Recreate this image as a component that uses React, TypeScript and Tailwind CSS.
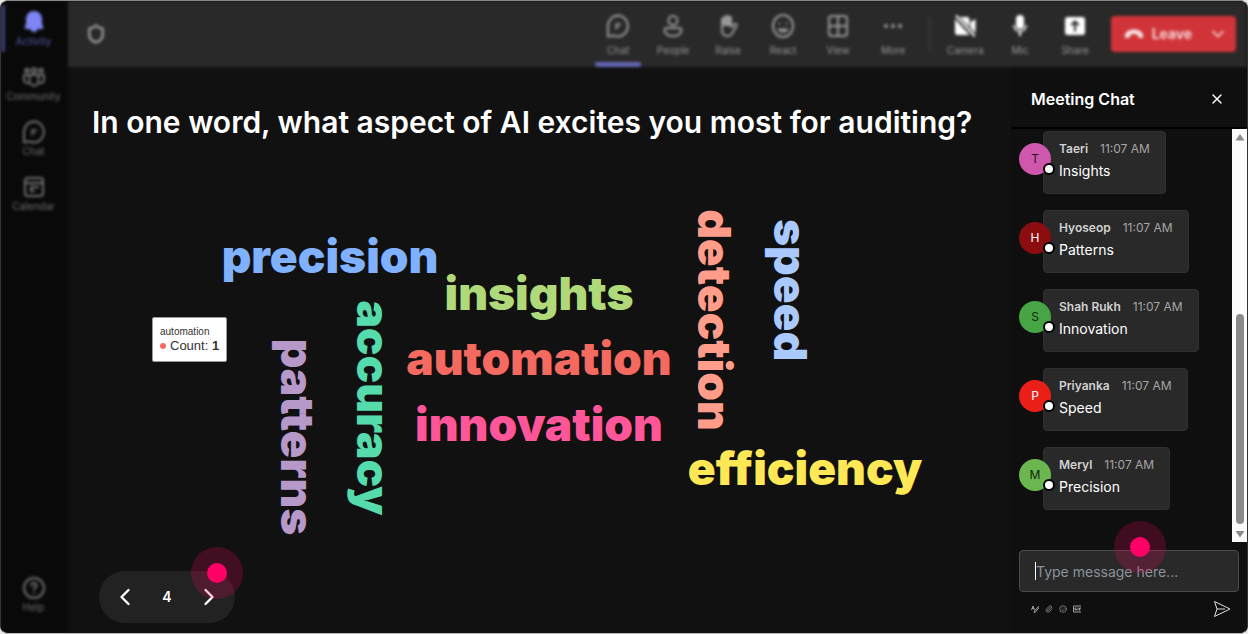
import type { ReactNode } from 'react';
import { ChevronDown, ChevronLeft, ChevronRight, Paperclip, Shield, Smile, X } from 'lucide-react';

interface CloudWord {
  text: string;
  x: number;
  y: number;
  color: string;
  vertical?: boolean;
}

const words: CloudWord[] = [
  { text: 'precision', x: 262, y: 131, color: '#80b1ff' },
  { text: 'insights', x: 471, y: 168, color: '#b0d97a' },
  { text: 'automation', x: 471, y: 233, color: '#f46a60' },
  { text: 'innovation', x: 471, y: 299, color: '#ff5599' },
  { text: 'efficiency', x: 737, y: 343, color: '#ffe855' },
  { text: 'patterns', x: 213, y: 295, color: '#b799c9', vertical: true },
  { text: 'accuracy', x: 289, y: 266, color: '#55dbac', vertical: true },
  { text: 'detection', x: 630, y: 178, color: '#ff9d8a', vertical: true },
  { text: 'speed', x: 706, y: 148, color: '#a9c9ff', vertical: true },
];

const messages = [
  { name: 'Taeri', text: 'Insights', avatar: 'bg-[#cf57ae] text-[#2b1024]' },
  { name: 'Hyoseop', text: 'Patterns', avatar: 'bg-[#8b0d10] text-white' },
  { name: 'Shah Rukh', text: 'Innovation', avatar: 'bg-[#48a545] text-[#10240f]' },
  { name: 'Priyanka', text: 'Speed', avatar: 'bg-[#ea2018] text-white' },
  { name: 'Meryl', text: 'Precision', avatar: 'bg-[#6cb650] text-[#10240f]' },
];

function Icon({ children, fill }: { children: ReactNode; fill?: boolean }) {
  return (
    <svg
      className="size-6"
      viewBox="0 0 24 24"
      fill={fill ? 'currentColor' : 'none'}
      stroke="currentColor"
      strokeWidth={fill ? 0 : 2}
      strokeLinecap="round"
      strokeLinejoin="round"
      aria-hidden="true"
    >
      {children}
    </svg>
  );
}

const chatIcon = (
  <Icon>
    <path d="M12 1.500a10 10.500 0 1 1-4.600 19.900L2 22.500V12A10 10.500 0 0 1 12 1.500z" />
    <path d="M10 15v-5h4.500M10 12.500h3" strokeWidth={1.5} />
  </Icon>
);

const sideItems = [
  {
    label: 'Activity',
    icon: (
      <Icon fill>
        <path d="M12 1a8 8 0 0 0-8 8v4.700L2.700 17.500a1.200 1.200 0 0 0 1.100 1.500h4.400a3.900 3.900 0 0 0 7.600 0h4.400a1.200 1.200 0 0 0 1.100-1.500L20 13.700V9a8 8 0 0 0-8-8z" />
      </Icon>
    ),
  },
  {
    label: 'Community',
    icon: (
      <Icon>
        <circle cx="12" cy="5.500" r="2.200" />
        <circle cx="5" cy="5.500" r="1.800" />
        <circle cx="19" cy="5.500" r="1.800" />
        <path d="M2 10h20v4.500a3.500 3.500 0 0 1-4 3.500M2 10v4.500A3.500 3.500 0 0 0 6 18M7.500 10.500V16a4.500 4.500 0 0 0 9 0v-5.500" />
      </Icon>
    ),
  },
  { label: 'Chat', icon: chatIcon },
  {
    label: 'Calendar',
    icon: (
      <Icon>
        <rect x="3" y="3" width="18" height="18" rx="3" />
        <path d="M3 8h18M9 16v-4h7M9 16h3" />
      </Icon>
    ),
  },
];

const viewActions = [
  { label: 'Chat', icon: chatIcon },
  {
    label: 'People',
    icon: (
      <Icon>
        <circle cx="12" cy="6.500" r="4.500" />
        <path d="M5.500 14h13a2 2 0 0 1 2 2c0 3.500-3.500 6-8.500 6s-8.500-2.500-8.500-6a2 2 0 0 1 2-2z" />
      </Icon>
    ),
  },
  {
    label: 'Raise',
    icon: (
      <Icon>
        <path d="M6 12V5.500a1.500 1.500 0 0 1 3 0V10 3.500a1.500 1.500 0 0 1 3 0V10 4a1.500 1.500 0 0 1 3 0v9l3.500-3c1-.8 2.700.4 2 1.800L16.500 19c-1.300 2.200-3 3-5 3-3.500 0-5.500-2.500-5.500-6z" />
        <path d="M7 5v6h7V4h-4z" fill="currentColor" />
      </Icon>
    ),
  },
  {
    label: 'React',
    icon: (
      <Icon>
        <ellipse cx="12" cy="12" rx="10" ry="11" />
        <path d="M7.500 15.500a5.500 5.500 0 0 0 9 0zM8.500 9.500h.1M15.500 9.500h.1" />
      </Icon>
    ),
  },
  {
    label: 'View',
    icon: (
      <Icon>
        <rect x="3" y="2" width="18" height="20" rx="3" />
        <path d="M12 3v18M3 12h18" />
      </Icon>
    ),
  },
  {
    label: 'More',
    icon: (
      <Icon fill>
        <circle cx="5" cy="12" r="2" />
        <circle cx="12" cy="12" r="2" />
        <circle cx="19" cy="12" r="2" />
      </Icon>
    ),
  },
];

const deviceActions = [
  {
    label: 'Camera',
    icon: (
      <Icon fill>
        <path d="M2 2l19 21 1.500-1.500L4 1zM7 3h7a2.500 2.500 0 0 1 2.500 2.500V13zM17.500 8l5-3v14l-5-5zM2 5l14.500 16H4.500A2.500 2.500 0 0 1 2 18.500z" />
      </Icon>
    ),
  },
  {
    label: 'Mic',
    icon: (
      <Icon fill>
        <rect x="8" y="1" width="8" height="14" rx="4" />
        <path d="M5 11h1.500a5.500 5.500 0 0 0 11 0H19a7 7 0 0 1-6 7v4h-2v-4a7 7 0 0 1-6-7z" />
      </Icon>
    ),
  },
  {
    label: 'Share',
    icon: (
      <Icon fill>
        <path
          fillRule="evenodd"
          d="M4.500 3h15A2.500 2.500 0 0 1 22 5.500v13a2.500 2.500 0 0 1-2.500 2.500h-15A2.500 2.500 0 0 1 2 18.500v-13A2.500 2.500 0 0 1 4.500 3zM12 6l-4.500 4.500L9 12l2-2v7.500h2V10l2 2 1.500-1.500z"
        />
      </Icon>
    ),
  },
];

function Sidebar() {
  return (
    <nav className="flex w-[67px] shrink-0 flex-col bg-[#090909] text-[10px] leading-3 text-[#707070] blur-[0.1rem]">
      {sideItems.map((item, idx) => (
        <button
          key={item.label}
          className={`relative flex h-[55px] flex-col items-center justify-center gap-px pr-0.5 ${
            idx === 0 ? 'text-[#5557ab]' : ''
          }`}
        >
          {idx === 0 && <span className="absolute top-1 bottom-1 left-0 w-1 bg-[#3a3b73]" />}
          <span className={idx === 0 ? 'text-[#7f85f5]' : ''}>{item.icon}</span>
          {item.label}
        </button>
      ))}
      <button className="mt-auto mb-5 flex flex-col items-center gap-px pr-0.5">
        <Icon>
          <circle cx="12" cy="12" r="10" />
          <path d="M9.500 9.500a2.500 2.500 0 1 1 3.500 2.300c-.7.400-1 .8-1 1.700M12 17h.1" />
        </Icon>
        Help
      </button>
    </nav>
  );
}

function TopBar() {
  return (
    <header className="flex h-[66px] shrink-0 items-stretch bg-[#292929] pr-[11px] text-[10px] leading-3 text-[#999] blur-[0.1rem]">
      <button className="px-[18px]" aria-label="Security">
        <Shield className="size-5" strokeWidth={3} />
      </button>
      <div className="ml-auto flex">
        {viewActions.map((action, idx) => (
          <button key={action.label} className="relative flex w-[55px] flex-col items-center gap-[6px] pt-[13px]">
            {action.icon}
            {action.label}
            {idx === 0 && <span className="absolute bottom-0 h-[5px] w-[46px] rounded-sm bg-[#6366b5]" />}
          </button>
        ))}
        <span className="mx-2 my-4 w-px bg-[#444]" />
        {deviceActions.map(action => (
          <button key={action.label} className="flex w-[55px] flex-col items-center gap-[6px] pt-[13px]">
            <span className="text-white">{action.icon}</span>
            {action.label}
          </button>
        ))}
      </div>
      <div className="ml-2 flex h-9 items-center self-center rounded-sm bg-[#d13438] text-sm font-semibold text-[#f7e4e4]">
        <button className="flex items-center gap-2 pl-[13px]">
          <svg className="h-5 w-5" viewBox="0 0 20 20" fill="currentColor" aria-hidden="true">
            <path d="M10 5.500c4 0 7.500 1.700 8.800 4.500.5 1.200.5 2.500.1 3.500-.2.500-.7.700-1.200.6l-3-.6a1.200 1.200 0 0 1-.9-1l-.3-1.900a11 11 0 0 0-7 0l-.3 1.900c-.1.500-.4.900-.9 1l-3 .6c-.5.100-1-.1-1.200-.6-.4-1-.4-2.300.1-3.500C2.500 7.200 6 5.500 10 5.500z" />
          </svg>
          Leave
        </button>
        <button className="pr-2 pl-4" aria-label="Leave options">
          <ChevronDown className="size-5" />
        </button>
      </div>
    </header>
  );
}

function WordCloud() {
  return (
    <div className="relative min-h-0 flex-1">
      <svg className="h-full w-full" viewBox="0 0 942 429" preserveAspectRatio="xMinYMin meet" role="img">
        {words.map(word => (
          <text
            key={word.text}
            transform={`translate(${word.x} ${word.y})${word.vertical ? ' rotate(90)' : ''}`}
            textAnchor="middle"
            fill={word.color}
            className="font-['Inter',sans-serif] text-[46px] font-black"
          >
            {word.text}
          </text>
        ))}
      </svg>
      <div className="absolute top-[175px] left-[84px] rounded-xs border border-[#999] bg-white px-[7px] pt-2 pb-[7px] font-['Liberation_Sans',sans-serif] text-[#333]">
        <div className="text-[10px] leading-3">automation</div>
        <div className="flex items-center gap-1 text-[13px] leading-4">
          <span className="size-[6px] rounded-full bg-[#f46a60]" />
          <span>
            Count: <b>1</b>
          </span>
        </div>
      </div>
    </div>
  );
}

function TapMarker() {
  return (
    <span className="pointer-events-none flex size-[52px] items-center justify-center rounded-full bg-[#ff0066]/20">
      <span className="size-5 rounded-full bg-[#ff0066]" />
    </span>
  );
}

function Pager() {
  return (
    <div className="relative mb-[10px] ml-[31px] flex h-[52px] w-[136px] shrink-0 items-center justify-between self-start rounded-full bg-[#222] px-3 text-white">
      <button aria-label="Previous slide">
        <ChevronLeft className="size-7" />
      </button>
      <span className="text-sm font-semibold">4</span>
      <button aria-label="Next slide">
        <ChevronRight className="size-7" />
      </button>
      <div className="absolute -top-6 -right-2">
        <TapMarker />
      </div>
    </div>
  );
}

function ChatPanel() {
  return (
    <aside className="flex w-[236px] shrink-0 flex-col bg-[#0f0f0f]">
      <div className="flex h-[62px] shrink-0 items-center justify-between border-b-2 border-black pt-[3px] pr-[22px] pl-5 text-white">
        <h2 className="text-base font-semibold">Meeting Chat</h2>
        <button aria-label="Close chat">
          <X className="size-4" />
        </button>
      </div>

      {/* Messages */}
      <div className="flex min-h-0 flex-1">
        <ul className="flex flex-1 flex-col gap-4 overflow-hidden pt-0.5 pl-2">
          {messages.map(msg => (
            <li key={msg.name} className="flex items-start">
              <div
                className={`relative z-10 mt-3 -mr-2 flex size-8 items-center justify-center rounded-full text-xs ${msg.avatar}`}
              >
                {msg.name[0]}
                <span className="absolute -right-1 bottom-0 size-3 rounded-full border-2 border-black bg-white" />
              </div>
              <div className="min-h-[63px] rounded-sm border border-[#303030] bg-[#292929] px-[15px] pt-[7px]">
                <div className="flex gap-3 text-xs leading-5">
                  <span className="font-semibold text-[#d1d1d1]">{msg.name}</span>
                  <time className="text-[#a6a6a6]">11:07 AM</time>
                </div>
                <p className="text-sm leading-6 text-white">{msg.text}</p>
              </div>
            </li>
          ))}
        </ul>
        <div className="flex w-[15px] shrink-0 flex-col items-center justify-between bg-[#fcfcfc] py-1 text-[#8b8b8b]">
          <svg className="h-2 w-[10px]" viewBox="0 0 10 8" fill="currentColor" aria-hidden="true">
            <path d="M5 1l4.500 6.500h-9z" />
          </svg>
          <div className="flex h-[388px] w-2 flex-col justify-end pb-[6px]">
            <div className="h-[210px] rounded-full bg-[#8b8b8b]" />
          </div>
          <svg className="h-2 w-[10px]" viewBox="0 0 10 8" fill="currentColor" aria-hidden="true">
            <path d="M5 7.500L.5 1h9z" />
          </svg>
        </div>
      </div>

      {/* Composer */}
      <div className="relative shrink-0 px-2 pt-2">
        <input
          type="text"
          aria-label="Message"
          placeholder="Type message here..."
          className="block h-[42px] w-full rounded-sm border border-[#4a4a4a] bg-[#292929] px-4 text-sm text-white outline-none placeholder:text-[#8a929c]"
        />
        <span className="absolute top-5 left-6 h-[18px] w-px bg-white" />
        <div className="absolute -top-[21px] left-[103px]">
          <TapMarker />
        </div>
        <div className="flex h-[41px] items-center gap-[6px] px-3 pb-2 text-[#a0a0a0]">
          <button aria-label="Format">
            <svg className="size-2" viewBox="0 0 16 16" fill="none" stroke="currentColor" strokeWidth="2" aria-hidden="true">
              <path d="M1 10L4 2l3 8M2 7h4M15 3l-8 9-1 3 3-1 7-9z" />
            </svg>
          </button>
          <button aria-label="Attach">
            <Paperclip className="size-2" />
          </button>
          <button aria-label="Emoji">
            <Smile className="size-2" />
          </button>
          <button aria-label="GIF">
            <svg className="size-2" viewBox="0 0 16 16" fill="none" stroke="currentColor" strokeWidth="2" aria-hidden="true">
              <path d="M16 2H1v12h15M7 6H4v4h3V8M10 5v6M16 6h-3v5M13 8h2" />
            </svg>
          </button>
          <button className="-mr-1 ml-auto" aria-label="Send">
            <svg
              className="size-[18px]"
              viewBox="0 0 18 18"
              fill="none"
              stroke="#e0e0e0"
              strokeLinejoin="round"
              aria-hidden="true"
            >
              <path d="M1.500 1.500l15.500 7.500-15.500 7.500 2.500-7.500zM4 9h8" />
            </svg>
          </button>
        </div>
      </div>
    </aside>
  );
}

export default function App() {
  return (
    <div className="h-screen min-h-[634px] bg-[#e8e8e8] font-['Inter',sans-serif]">
      <div className="flex h-full overflow-hidden rounded-lg border border-t-[#888] border-r-[#333] border-b-[#bbb] border-l-[#333] bg-[#111]">
        <Sidebar />
        <div className="flex min-w-0 flex-1 flex-col">
          <TopBar />
          <div className="flex min-h-0 flex-1">
            <main className="flex min-w-0 flex-1 flex-col">
              <h1 className="pt-[35px] pl-6 text-[30px] leading-10 font-semibold text-white">
                In one word, what aspect of AI excites you most for auditing?
              </h1>
              <WordCloud />
              <Pager />
            </main>
            <ChatPanel />
          </div>
        </div>
      </div>
    </div>
  );
}
